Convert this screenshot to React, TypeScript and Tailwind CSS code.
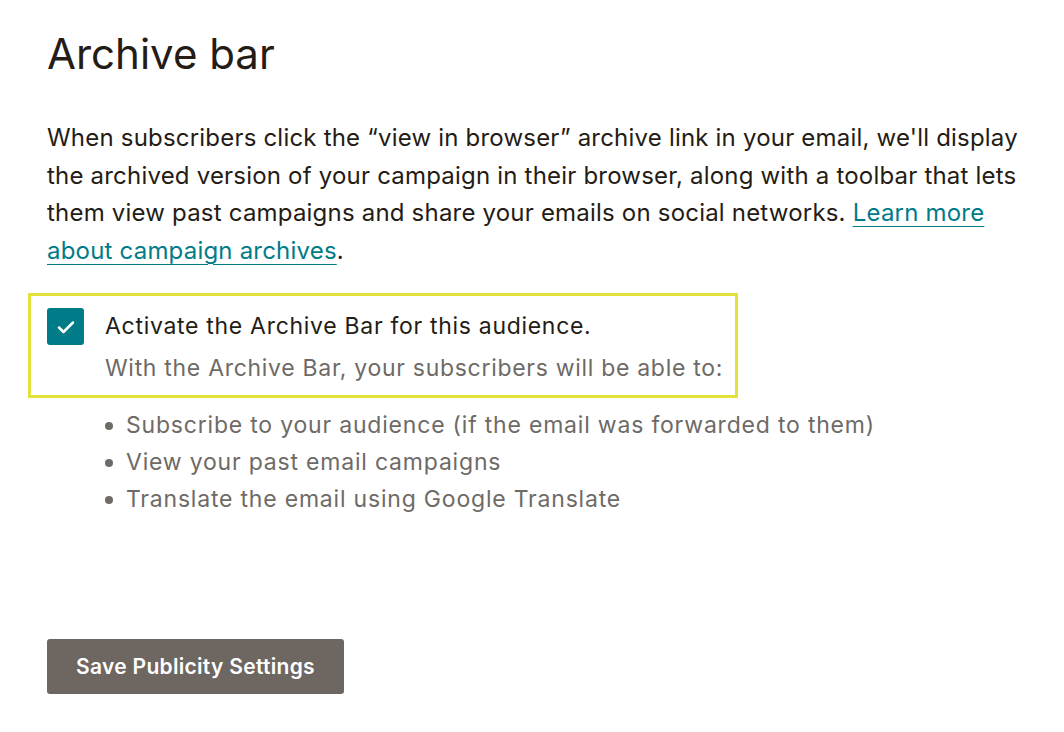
export default function App() {
  return (
    <div className="min-h-screen bg-white text-[#241c15] px-[47px] pt-[25px]" style={{ fontFamily: 'Inter, sans-serif' }}>
      <h1 className="text-[42px] leading-[58px] font-normal">Archive bar</h1>

      <p className="mt-[36px] text-[24px] leading-[37.5px] tracking-[0.2px] whitespace-nowrap">
        When subscribers click the “view in browser” archive link in your email, we'll display
        <br />
        the archived version of your campaign in their browser, along with a toolbar that lets
        <br />
        them view past campaigns and share your emails on social networks.{" "}
        <a href="#" className="text-[#007c89] underline underline-offset-[5px] decoration-1">
          Learn more
          <br />
          about campaign archives
        </a>
        .
      </p>

      <div className="mt-[24px] -ml-[19px] w-[710px] border-[3px] border-[#e2e23a] pl-[16px] pt-[12px] pb-[3px] flex gap-[21px]">
        <div className="w-[37px] h-[37px] rounded-[3px] bg-[#007c89] flex items-center justify-center shrink-0">
          <svg width="18" height="14" viewBox="0 0 18 14" fill="none">
            <path d="M2 7.5l4.5 4.5L16 2.5" stroke="white" strokeWidth="2.5" strokeLinecap="round" strokeLinejoin="round" />
          </svg>
        </div>
        <div className="tracking-[0.7px]">
          <div className="text-[23px] leading-[36px]">Activate the Archive Bar for this audience.</div>
          <div className="text-[23px] leading-[48px] text-[#6e6a66]">With the Archive Bar, your subscribers will be able to:</div>
        </div>
      </div>

      <ul className="mt-[9px] ml-[58px] text-[23px] leading-[37px] tracking-[0.8px] text-[#6e6a66]">
        <li className="flex items-center gap-[13px]"><span className="w-[8px] h-[8px] rounded-full bg-[#6e6a66]" />Subscribe to your audience (if the email was forwarded to them)</li>
        <li className="flex items-center gap-[13px]"><span className="w-[8px] h-[8px] rounded-full bg-[#6e6a66]" />View your past email campaigns</li>
        <li className="flex items-center gap-[13px]"><span className="w-[8px] h-[8px] rounded-full bg-[#6e6a66]" />Translate the email using Google Translate</li>
      </ul>

      <button className="mt-[121px] w-[297px] h-[55px] rounded-[3px] bg-[#6d6661] text-white text-[21px] font-semibold tracking-[0.3px]">
        Save Publicity Settings
      </button>
    </div>
  );
}
